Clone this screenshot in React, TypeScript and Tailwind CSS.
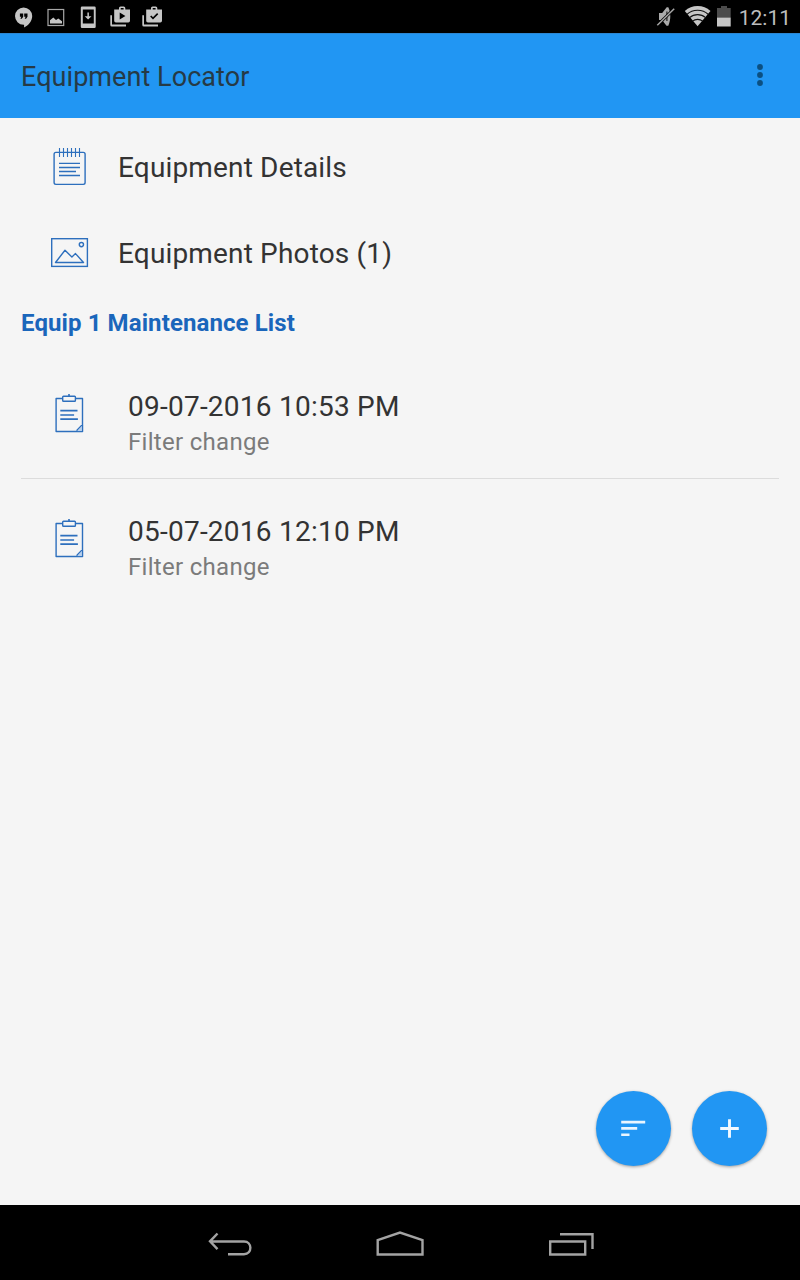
import type { ReactNode } from "react";

function StatusIcons() {
  return (
    <svg width="152" height="24" viewBox="14 4.5 152 24" fill="#c6c6c6">
      {/* chat bubble */}
      <path d="M23.6 7a8.6 8.6 0 0 0 0 17.2h.5V27c4.6-2 8.1-6.4 8.1-11.4A8.6 8.6 0 0 0 23.600 7z" />
      <path d="M19.900 13h3.300v3.200l-1.400 2.100h-1.400l.9-2.100h-1.400zM24.200 13h3.300v3.200l-1.400 2.100h-1.400l.9-2.100h-1.400z" fill="#000" />
      {/* picture */}
      <rect x="48" y="9" width="15.700" height="16" fill="none" stroke="#a8a8a8" strokeWidth="1.200" />
      <path d="M50 22.900v-3.100l3.300-2.700 2.700 2.300 2.300-1.300 3.700 2.700v2.100z" />
      {/* device download */}
      <path fillRule="evenodd" d="M82 6h12.500a1.200 1.200 0 0 1 1.200 1.200v19a1.200 1.200 0 0 1-1.200 1.200H82a1.200 1.200 0 0 1-1.200-1.200v-19A1.200 1.200 0 0 1 82 6zm.8 3v14h11V9z" />
      <path d="M87.400 12h1.500v3.700h2.600L88.100 19l-3.400-3.300h2.700z" />
      {/* store bags */}
      <path d="M110.300 14.700h1.700v9.400h14v1.800h-14.200a1.500 1.500 0 0 1-1.500-1.500z" />
      <path fillRule="evenodd" d="M119 9V7.600A1.600 1.600 0 0 1 120.600 6h3.100a1.600 1.600 0 0 1 1.600 1.600V9h4.700v11.200a1.700 1.700 0 0 1-1.700 1.700h-12.400a1.700 1.700 0 0 1-1.700-1.700V9zm1.700 0h2.900V7.600h-2.900zm-1 3v6.900l5.700-3.500z" />
      <path d="M142.300 14.700h1.700v9.400h14v1.800h-14.200a1.500 1.500 0 0 1-1.500-1.500z" />
      <path fillRule="evenodd" d="M151 9V7.600a1.600 1.600 0 0 1 1.600-1.600h3.100a1.600 1.600 0 0 1 1.600 1.600V9h4.700v11.200a1.700 1.700 0 0 1-1.700 1.700h-12.400a1.700 1.700 0 0 1-1.700-1.700V9zm1.700 0h2.900V7.600h-2.900z" />
      <path d="m150.700 15.500 2.300 2.400 4.700-4.800" fill="none" stroke="#000" strokeWidth="1.600" />
    </svg>
  );
}

function SystemIcons() {
  return (
    <svg width="77" height="24" viewBox="656 4.5 77 24" fill="#c6c6c6">
      {/* muted speaker */}
      <path d="M659 12.500h3.200l4.500-5.700h1.600c1.300 2.500 2 5.800 2 9s-.7 6.500-2 9.400h-1.800l-4.500-5.700h-3z" fill="#aaa" />
      <path d="M666.900 11v9.500" stroke="#222" strokeWidth="1.200" />
      <path d="m657.300 24.800 16.900-16.500" stroke="#000" strokeWidth="3" />
      <path d="m657.300 24.800 16.900-16.500" stroke="#a6a6a6" strokeWidth="1.500" />
      {/* wifi */}
      <path d="M684.800 10.500a19 19 0 0 1 25.700 0L697.600 25.700z" />
      <path d="M686.800 14a16 16 0 0 1 21.600 0M689.600 17.200a12 12 0 0 1 16 0M692.500 20.700a8 8 0 0 1 10.200 0" fill="none" stroke="#111" strokeWidth="1.100" />
      {/* battery */}
      <path d="M721 5.500h6v2h3.700V17H717V7.500h4z" fill="#4c4c4c" />
      <path d="M717 17h13.700v9H717z" />
    </svg>
  );
}

function NotepadIcon() {
  return (
    <svg width="34" height="38" viewBox="53 148 34 38" fill="none" stroke="#2d6fbd" strokeWidth="1.400">
      <rect x="54.100" y="152.400" width="31" height="32" rx="1.800" />
      <path d="M59.500 148v9M63.500 148v9M67.500 148v9M71.500 148v9M75.500 148v9M79.500 148v9" strokeWidth="1.100" />
      <path d="M59 163.400h21M59 167.500h21M59 171.500h17M59 175.500h21" strokeWidth="1.400" />
    </svg>
  );
}

function PhotoIcon() {
  return (
    <svg width="38" height="30" viewBox="51 238 38 30" fill="none" stroke="#2d6fbd" strokeWidth="1.400">
      <rect x="51.700" y="238.700" width="35.700" height="27.700" />
      <circle cx="81.400" cy="244.600" r="2.100" />
      <path d="m55.500 262.500 9.500-12.300 6.900 6.900 3.600-3.500 8 8.900z" strokeLinejoin="round" />
    </svg>
  );
}

function ClipboardIcon() {
  return (
    <svg width="30" height="40" viewBox="54 394 30 40" fill="none" stroke="#2d6fbd" strokeWidth="1.400">
      <path d="M62.500 398.500h-6.400v33h26.400v-33h-6.900" strokeLinejoin="round" />
      <rect x="62.700" y="396.300" width="12.700" height="5" rx="0.800" />
      <path d="M69 394v2" strokeWidth="1.600" />
      <path d="M60.300 410.700h17.200M60.300 415h13.800M60.300 419.200h17.600" strokeWidth="1.700" />
      <path d="M77 431.300v-1.300l4.300-4.500h1.200v6z" fill="#b9d0ec" strokeWidth="1.100" />
    </svg>
  );
}

function MenuRow({ icon, label }: { icon: ReactNode; label: string }) {
  return (
    <li className="flex h-[86px] items-center">
      <span className="flex w-[118px] items-center pl-[51px]">{icon}</span>
      <span className="pt-[2px] text-[28px] leading-8 tracking-[0.16px] text-[#333]">{label}</span>
    </li>
  );
}

function MaintenanceRow({ date, note }: { date: string; note: string }) {
  return (
    <li className="flex h-[125px] pt-[35px]">
      <span className="w-[107px] pt-[5px] pl-[33px]">
        <ClipboardIcon />
      </span>
      <div className="flex flex-col">
        <span className="text-[28px] leading-9 tracking-[0.24px] text-[#333]">{date}</span>
        <span className="text-[24px] leading-[34px] tracking-[0.3px] text-[#7b7b7b]">{note}</span>
      </div>
    </li>
  );
}

function Fab({ label, children }: { label: string; children: ReactNode }) {
  return (
    <button
      aria-label={label}
      className="flex size-[75px] items-center justify-center rounded-full bg-[#2196f3] shadow-[0_1px_3px_rgba(0,0,0,0.35)]"
    >
      {children}
    </button>
  );
}

export default function App() {
  return (
    <div className="relative flex h-[1280px] w-[800px] flex-col bg-[#f5f5f5] font-['Roboto',sans-serif]">
      <div className="flex h-[33px] shrink-0 items-center justify-between bg-black pr-[9px] pl-[14px]">
        <StatusIcons />
        <div className="flex items-center gap-[6px]">
          <SystemIcons />
          <span className="pt-[2px] text-[21px] leading-6 text-[#bdbdbd]">12:11</span>
        </div>
      </div>

      <header className="flex h-[85px] shrink-0 items-center justify-between border-t border-[#2b87d3] bg-[#2196f3] pr-[36px] pl-[21px]">
        <h1 className="pt-[2px] text-[27px] leading-8 tracking-[0.06px] text-[#263a46]">Equipment Locator</h1>
        <button aria-label="More options" className="pb-[2px]">
          <svg width="8" height="24" viewBox="0 0 8 24" fill="#0b4f80">
            <circle cx="4" cy="4" r="2.900" />
            <circle cx="4" cy="12" r="2.900" />
            <circle cx="4" cy="20" r="2.900" />
          </svg>
        </button>
      </header>

      <main className="flex flex-1 flex-col pt-[6px]">
        <ul>
          <MenuRow icon={<span className="pl-[2px]"><NotepadIcon /></span>} label="Equipment Details" />
          <MenuRow icon={<PhotoIcon />} label="Equipment Photos (1)" />
        </ul>
        <h2 className="h-[58px] pt-[11px] pl-[21px] text-[24px] leading-8 font-bold tracking-[0.1px] text-[#1a66bb]">
          Equip 1 Maintenance List
        </h2>
        <ul className="mx-[21px] divide-y divide-[#dcdcdc]">
          <MaintenanceRow date="09-07-2016 10:53 PM" note="Filter change" />
          <MaintenanceRow date="05-07-2016 12:10 PM" note="Filter change" />
        </ul>
      </main>

      <div className="absolute right-[33px] bottom-[114px] flex gap-[21px]">
        <Fab label="Sort">
          <svg width="25" height="19" viewBox="0 0 25 19" fill="#e9f5ff">
            <path d="M.2 1.700h24v2.700H.2zM.2 8.100h16v2.700H.2zM.2 14.400h8.300v2.700H.2z" />
          </svg>
        </Fab>
        <Fab label="Add">
          <svg width="19" height="19" viewBox="0 0 19 19" stroke="#f2f9ff" strokeWidth="2.900">
            <path d="M9.500 .2v18.600M.2 9.500h18.600" />
          </svg>
        </Fab>
      </div>

      <nav className="flex h-[75px] shrink-0 items-center bg-black pt-[3px] pl-[208px]">
        <svg width="388" height="28" viewBox="208 1230 388 28" fill="none" stroke="#a3a3a3" strokeWidth="2.400">
          <path d="m217.500 1233.500-7.500 7.800 7.500 7.800M210 1241.500h34c8.500 0 8.500 12.700 0 12.700h-16" />
          <path d="M377.700 1254.500v-14.300l22.300-7.600 22.500 7.600v14.300z" />
          <path d="M550.200 1241.500h35v13h-35zM560 1234.300h32.500v14.700" />
        </svg>
      </nav>
    </div>
  );
}
